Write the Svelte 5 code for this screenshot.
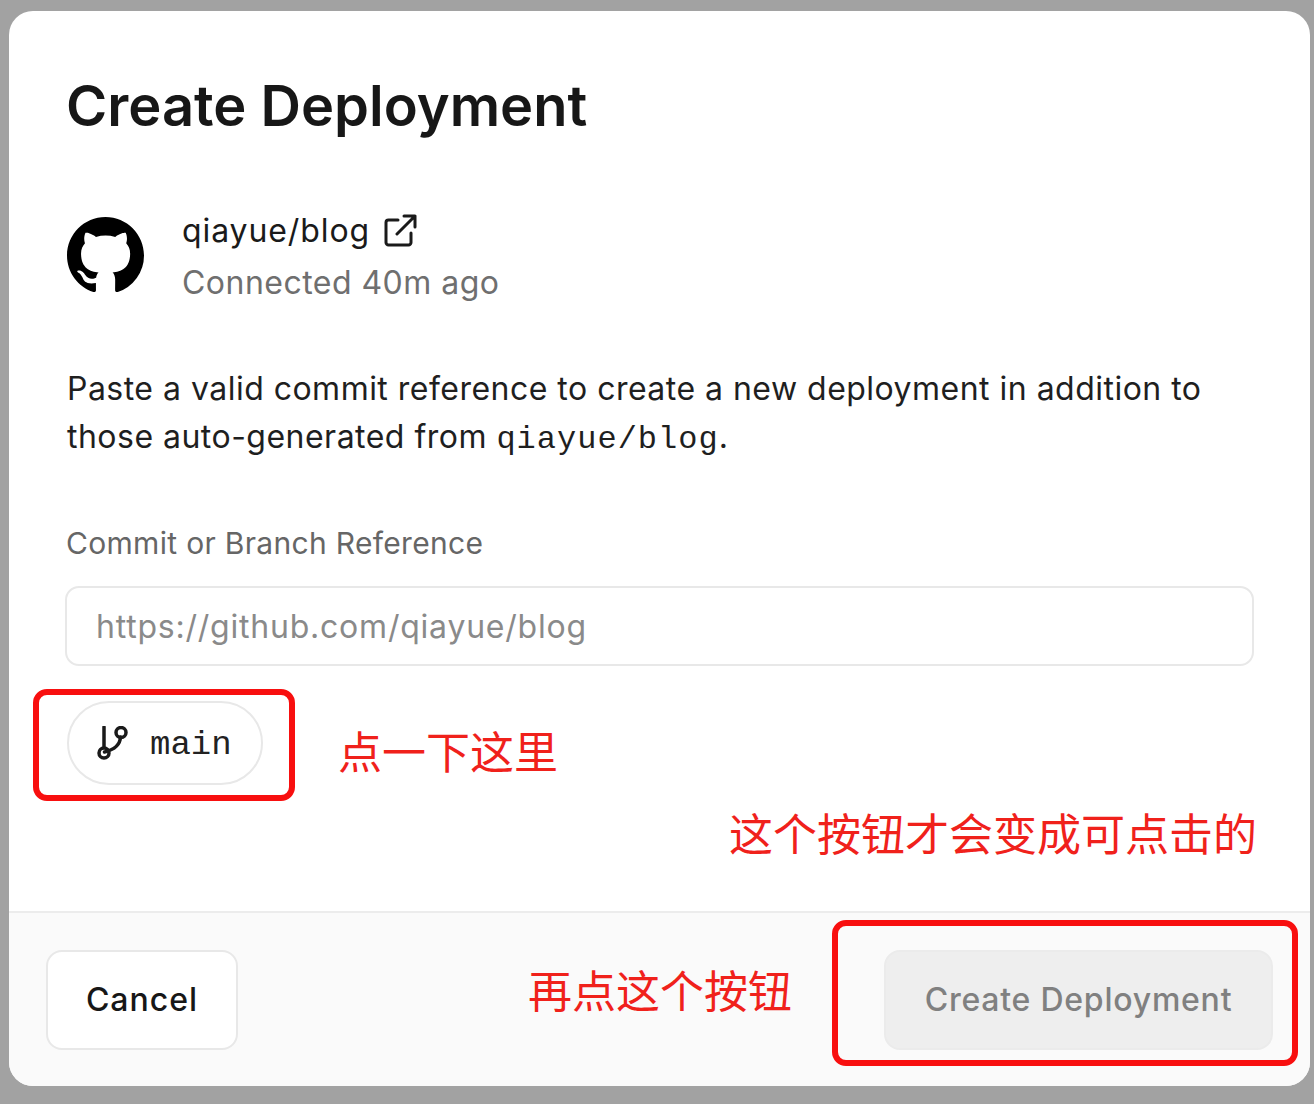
<script>
  const repo = 'qiayue/blog';
</script>

<div class="page">
  <div class="modal">
    <div class="body">
      <h1>Create Deployment</h1>
      <div class="repo">
        <svg class="gh" viewBox="0 0 16 16" aria-hidden="true"><path fill="#000" d="M8 0C3.58 0 0 3.58 0 8c0 3.54 2.29 6.53 5.47 7.59.4.07.55-.17.55-.38 0-.19-.01-.82-.01-1.49-2.01.37-2.53-.49-2.69-.94-.09-.23-.48-.94-.82-1.13-.28-.15-.68-.52-.01-.53.63-.01 1.08.58 1.23.82.72 1.21 1.87.87 2.33.66.07-.52.28-.87.51-1.07-1.78-.2-3.64-.89-3.64-3.95 0-.87.31-1.59.82-2.15-.08-.2-.36-1.02.08-2.12 0 0 .67-.21 2.2.82.64-.18 1.32-.27 2-.27s1.36.09 2 .27c1.53-1.04 2.2-.82 2.2-.82.44 1.1.16 1.92.08 2.12.51.56.82 1.27.82 2.15 0 3.07-1.87 3.75-3.65 3.95.29.25.54.73.54 1.48 0 1.07-.01 1.93-.01 2.2 0 .21.15.46.55.38A8.01 8.01 0 0 0 16 8c0-4.42-3.58-8-8-8z"/></svg>
        <div class="repo-text">
          <div class="repo-name">
            <span>{repo}</span>
            <svg class="ext" viewBox="0 0 34 34" aria-hidden="true"><path d="M15 6H5.5A2.5 2.5 0 0 0 3 8.500V28.500A2.500 2.500 0 0 0 5.500 31H25.500A2.500 2.500 0 0 0 28 28.500V19M14 20L32 2M21 2H32V13"/></svg>
          </div>
          <div class="repo-sub">Connected 40m ago</div>
        </div>
      </div>
      <p class="desc">Paste a valid commit reference to create a new deployment in addition to those auto-generated from <code>{repo}</code>.</p>
      <div class="label">Commit or Branch Reference</div>
      <div class="input">https://github.com/{repo}</div>
      <div class="pill">
        <svg viewBox="0 0 32 34" aria-hidden="true"><path d="M7 1V21M7.500 26C16 24 23 20 23.500 11"/><circle cx="7" cy="27" r="5"/><circle cx="24" cy="6.500" r="5"/></svg>
        <span>main</span>
      </div>
    </div>
    <div class="foot">
      <div class="btn cancel">Cancel</div>
      <div class="btn create">Create Deployment</div>
    </div>
  </div>

  <div class="box box-a"></div>
  <div class="box box-b"></div>
  <div class="note note-a">点一下这里</div>
  <div class="note note-b">这个按钮才会变成可点击的</div>
  <div class="note note-c">再点这个按钮</div>
</div>

<style>
  :global(body) {
    margin: 0;
    background: #a2a2a2;
  }
  .page {
    position: relative;
    width: 1314px;
    height: 1104px;
    padding: 11px 4px 18px 9px;
    box-sizing: border-box;
    font-family: Inter, "Liberation Sans", sans-serif;
    color: #171717;
  }
  .modal {
    height: 100%;
    display: flex;
    flex-direction: column;
    background: #fff;
    border-radius: 24px;
    overflow: hidden;
  }
  .body {
    flex: 1;
    padding: 62px 56px 0 58px;
  }
  h1 {
    margin: 0 0 0 -1px;
    font-size: 56px;
    line-height: 66px;
    font-weight: 600;
    letter-spacing: 0;
    color: #171717;
  }
  .repo {
    display: flex;
    align-items: center;
    gap: 38px;
    margin-top: 69px;
  }
  .gh {
    width: 77px;
    height: 77px;
    flex: none;
  }
  .repo-text {
    display: flex;
    flex-direction: column;
    gap: 14px;
    padding-top: 4px;
  }
  .repo-name {
    display: flex;
    align-items: center;
    gap: 13px;
    font-size: 32px;
    line-height: 38px;
    letter-spacing: 0.9px;
    color: #1a1a1a;
  }
  .ext {
    width: 34px;
    height: 34px;
    fill: none;
    stroke: #1a1a1a;
    stroke-width: 3;
    stroke-linecap: round;
    stroke-linejoin: round;
  }
  .repo-sub {
    font-size: 32px;
    line-height: 38px;
    letter-spacing: 0.47px;
    color: #6f6f6f;
  }
  .desc {
    margin: 63px 0 0;
    font-size: 32px;
    line-height: 48px;
    letter-spacing: 0.48px;
    color: #1f1f1f;
  }
  code {
    font-family: "Liberation Mono", "DejaVu Sans Mono", monospace;
    font-size: 32px;
    letter-spacing: 1px;
  }
  .label {
    margin: 59px 0 0 -1px;
    font-size: 30px;
    line-height: 40px;
    letter-spacing: 0.31px;
    color: #666;
  }
  .input {
    margin: 23px 0 0 -2px;
    height: 80px;
    box-sizing: border-box;
    display: flex;
    align-items: center;
    padding-left: 29px;
    border: 2px solid #e8e8e8;
    border-radius: 14px;
    font-size: 32px;
    letter-spacing: 0.78px;
    color: #8a8a8a;
  }
  .pill {
    display: inline-flex;
    align-items: center;
    gap: 21px;
    margin-top: 35px;
    height: 84px;
    width: 196px;
    box-sizing: border-box;
    padding-left: 28px;
    border: 2px solid #e8e8e8;
    border-radius: 42px;
    font-family: "Liberation Mono", monospace;
    font-size: 34px;
    color: #222;
  }
  .pill span {
    position: relative;
    top: 2px;
  }
  .pill svg {
    width: 32px;
    height: 34px;
    fill: none;
    stroke: #1a1a1a;
    stroke-width: 3.500;
    stroke-linecap: round;
  }
  .foot {
    height: 175px;
    box-sizing: border-box;
    display: flex;
    align-items: center;
    justify-content: space-between;
    padding: 0 37px;
    background: #fafafa;
    border-top: 2px solid #ececec;
  }
  .btn {
    height: 100px;
    box-sizing: border-box;
    display: flex;
    align-items: center;
    justify-content: center;
    border-radius: 16px;
    font-size: 32px;
    font-weight: 500;
    letter-spacing: 0.76px;
  }
  .cancel {
    width: 192px;
    background: #fff;
    border: 2px solid #e8e8e8;
    color: #171717;
    letter-spacing: 1px;
  }
  .create {
    width: 389px;
    background: #eeeeee;
    border: 2px solid #ebebeb;
    color: #808080;
  }
  .box {
    position: absolute;
    box-sizing: border-box;
    border: 6px solid #f80f0f;
    border-radius: 14px;
  }
  .box-a {
    left: 33px;
    top: 689px;
    width: 262px;
    height: 112px;
  }
  .box-b {
    left: 832px;
    top: 920px;
    width: 466px;
    height: 146px;
  }
  .note {
    position: absolute;
    font-family: "Noto Sans CJK SC", sans-serif;
    font-size: 44px;
    line-height: 52px;
    color: #f0211b;
    white-space: nowrap;
  }
  .note-a {
    left: 338px;
    top: 724px;
  }
  .note-b {
    left: 729px;
    top: 806px;
  }
  .note-c {
    left: 528px;
    top: 963px;
  }
</style>
